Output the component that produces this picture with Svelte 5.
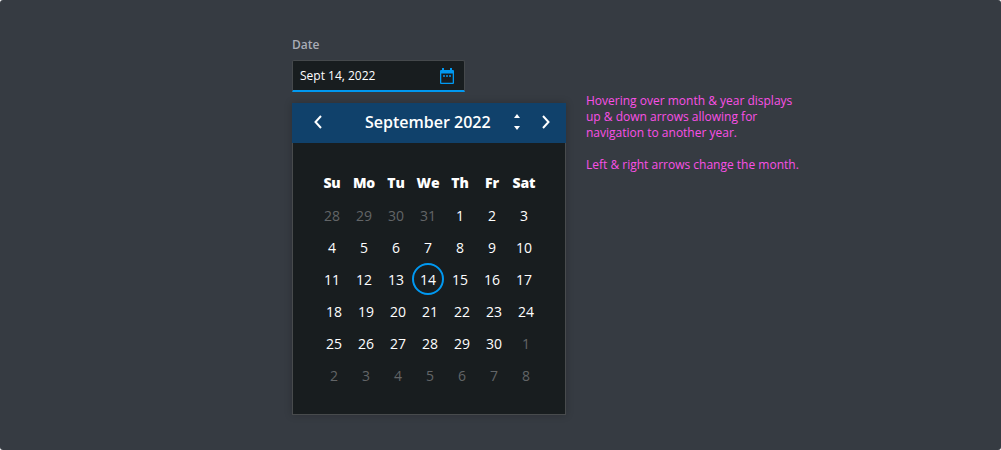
<script>
  const names = ['Su', 'Mo', 'Tu', 'We', 'Th', 'Fr', 'Sat'];
  const weeks = [
    [28, 29, 30, 31, 1, 2, 3],
    [4, 5, 6, 7, 8, 9, 10],
    [11, 12, 13, 14, 15, 16, 17],
    [18, 19, 20, 21, 22, 23, 24],
    [25, 26, 27, 28, 29, 30, 1],
    [2, 3, 4, 5, 6, 7, 8]
  ];
  const outside = (w, d) => (w === 0 && d > 20) || (w > 3 && d < 20);
</script>

<main>
  <section class="picker">
    <div class="label">Date</div>
    <div class="field">
      <span>Sept 14, 2022</span>
      <svg width="14" height="16" viewBox="0 0 14 16">
        <path fill="#0099f2" fill-rule="evenodd" d="M2 0h2v2h6V0h2v2h1a1 1 0 0 1 1 1v12a1 1 0 0 1-1 1H1a1 1 0 0 1-1-1V3a1 1 0 0 1 1-1h1zM1.300 5.500v9.200h11.400V5.500z" />
        <path fill="#0877bb" d="M3 7h2v2H3zM6 7h2v2H6zM9 7h2v2H9z" />
      </svg>
    </div>
    <div class="calendar">
      <header>
        <svg class="prev" width="8" height="14" viewBox="0 0 8 14"><path d="M7 1L1.500 7L7 13" /></svg>
        <h1>September 2022</h1>
        <svg class="year" width="6" height="16" viewBox="0 0 6 16"><path d="M0 4L3 0L6 4zM0 12L3 16L6 12z" /></svg>
        <svg class="next" width="8" height="14" viewBox="0 0 8 14"><path d="M1 1L6.500 7L1 13" /></svg>
      </header>
      <div class="grid">
        <div class="week names">
          {#each names as n}<b>{n}</b>{/each}
        </div>
        {#each weeks as week, w}
          <div class="week" class:shifted={w > 2}>
            {#each week as d}
              <span class:outside={outside(w, d)} class:selected={w === 2 && d === 14}>{d}</span>
            {/each}
          </div>
        {/each}
      </div>
    </div>
  </section>
  <aside>
    <p>Hovering over month &amp; year displays<br />up &amp; down arrows allowing for<br />navigation to another year.</p>
    <p>Left &amp; right arrows change the month.</p>
  </aside>
</main>

<style>
  :global(body) { background: #fff; }
  main {
    box-sizing: border-box;
    width: 1001px;
    height: 450px;
    padding: 37px 0 0 292px;
    display: flex;
    gap: 20px;
    border-radius: 3px;
    background: #363b42;
    font-family: "Open Sans", sans-serif;
    color: #fff;
  }
  .picker { width: 274px; }
  .label {
    height: 23px;
    font-size: 12px;
    line-height: 16px;
    font-weight: 600;
    color: #a9acb6;
  }
  .field {
    box-sizing: border-box;
    width: 173px;
    height: 32px;
    padding: 0 10px 0 7px;
    display: flex;
    align-items: center;
    justify-content: space-between;
    border: 1px solid #45494c;
    border-bottom: 2px solid #0099f2;
    border-radius: 2px 2px 0 0;
    background: #181d1f;
    font-size: 12px;
  }
  .field svg { margin-top: 1px; }
  .calendar {
    box-sizing: border-box;
    height: 312px;
    margin-top: 11px;
    border: 1px solid #484b4d;
    border-top: 0;
    background: #181d1f;
    box-shadow: 0 0 8px rgba(0, 0, 0, .2);
  }
  header {
    height: 40px;
    margin: 0 -1px;
    padding: 0 16px 0 22px;
    display: flex;
    align-items: center;
    background: #10416b;
  }
  header svg { flex: none; margin-top: -2px; }
  .prev path, .next path { fill: none; stroke: #fff; stroke-width: 2; }
  .year path { fill: #fff; }
  h1 {
    margin: -2px 0 0 43px;
    width: 149px;
    font-size: 16px;
    line-height: 22px;
    font-weight: 600;
    white-space: nowrap;
  }
  .next { margin-left: auto; }
  .grid { padding: 24px 0 0 23px; }
  .week {
    display: grid;
    grid-template-columns: repeat(7, 32px);
    height: 32px;
    font-size: 14px;
    line-height: 32px;
    text-align: center;
  }
  .names { height: 33px; font-weight: 700; letter-spacing: -.15px; }
  .shifted { margin-left: 2px; }
  .outside { color: #626567; }
  .selected {
    box-sizing: border-box;
    height: 32px;
    margin-top: -1px;
    border: 2px solid #0099f2;
    border-radius: 50%;
    line-height: 30px;
  }
  aside {
    padding-top: 56px;
    font-size: 12px;
    line-height: 16px;
    color: #fa50e6;
  }
  p { margin: 0 0 16px; white-space: nowrap; }
</style>
